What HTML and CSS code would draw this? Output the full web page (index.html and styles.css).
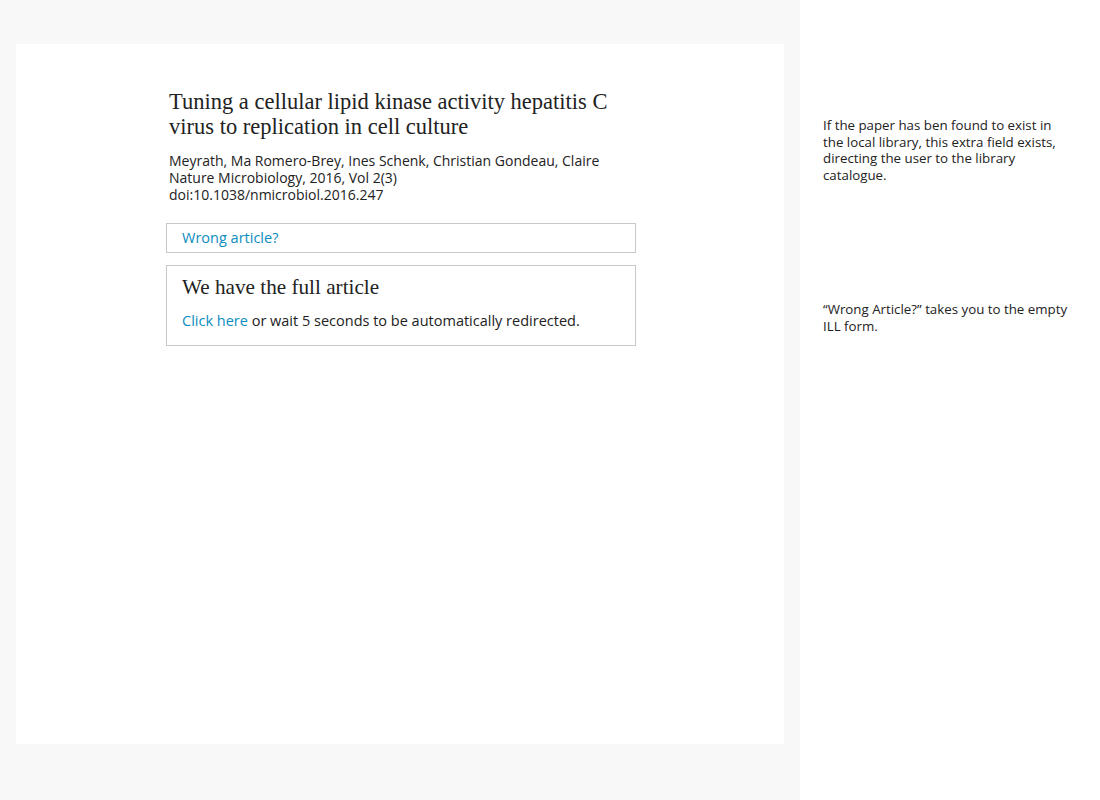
FILE: index.html
```html
<!DOCTYPE html>
<html>
<head>
<meta charset="utf-8">
<link rel="stylesheet" href="styles.css">
</head>
<body>
<div class="layout">
  <div class="stage">
    <div class="panel">
      <div class="content">
        <div class="record">
          <h1 class="title">Tuning a cellular lipid kinase activity hepatitis C virus to replication in cell culture</h1>
          <div class="meta">
            <div>Meyrath, Ma Romero-Brey, Ines Schenk, Christian Gondeau, Claire</div>
            <div>Nature Microbiology, 2016, Vol 2(3)</div>
            <div>doi:10.1038/nmicrobiol.2016.247</div>
          </div>
        </div>
        <div class="box wrong"><a class="link" href="#">Wrong article?</a></div>
        <div class="box full">
          <h2 class="box-title">We have the full article</h2>
          <p class="box-text"><a class="link" href="#">Click here</a> or wait 5 seconds to be automatically redirected.</p>
        </div>
      </div>
    </div>
  </div>
  <div class="notes">
    <p class="note note-1">If the paper has ben found to exist in the local library, this extra field exists, directing the user to the library catalogue.</p>
    <p class="note note-2">“Wrong Article?” takes you to the empty ILL form.</p>
  </div>
</div>
</body>
</html>
```
FILE: styles.css
```css
html, body {
  margin: 0;
  padding: 0;
  background: #ffffff;
}
body {
  font-family: "Open Sans", "Liberation Sans", sans-serif;
  color: #222222;
}
.layout {
  display: flex;
  width: 1100px;
  height: 800px;
}
.stage {
  width: 800px;
  box-sizing: border-box;
  background: #f8f8f8;
  padding: 44px 16px 56px 16px;
}
.panel {
  background: #ffffff;
  height: 700px;
}
.content {
  width: 470px;
  padding: 45px 0 0 150px;
}
.record {
  padding-left: 3px;
}
.title {
  margin: 0;
  font-family: "Liberation Serif", serif;
  font-weight: normal;
  font-size: 22.5px;
  line-height: 25px;
  color: #222222;
  width: 455px;
}
.meta {
  margin-top: 13px;
  font-size: 14px;
  line-height: 17px;
  color: #222222;
}
.box {
  border: 1px solid #c8c8c8;
  box-sizing: border-box;
  width: 470px;
  padding-left: 15px;
}
.wrong {
  margin-top: 20px;
  height: 30px;
  display: flex;
  align-items: center;
  padding-bottom: 2px;
  font-size: 14.5px;
}
.full {
  margin-top: 12px;
  height: 81px;
  padding-top: 9px;
}
.box-title {
  margin: 0;
  font-family: "Liberation Serif", serif;
  font-weight: normal;
  font-size: 21.2px;
  line-height: 24px;
  color: #222222;
}
.box-text {
  margin: 12px 0 0 0;
  font-size: 14.5px;
  line-height: 20px;
}
.link {
  color: #0b8dc0;
  text-decoration: none;
}
.notes {
  width: 300px;
  box-sizing: border-box;
  padding: 117px 24px 0 23px;
}
.note {
  margin: 0;
  width: 252px;
  font-size: 13.3px;
  line-height: 16.5px;
  color: #222222;
}
.note-2 {
  margin-top: 118px;
}
```
